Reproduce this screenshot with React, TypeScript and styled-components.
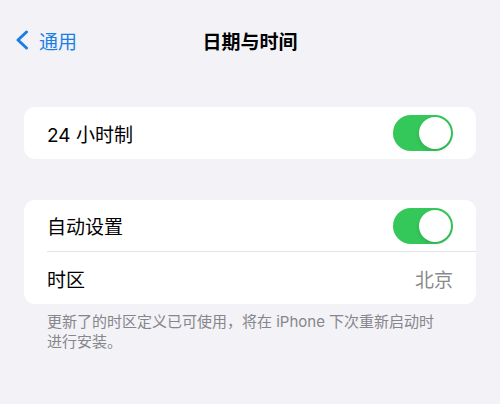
import React from "react";
import styled, { createGlobalStyle } from "styled-components";

const Global = createGlobalStyle`
  html, body { margin: 0; padding: 0; background: #f2f2f7; }
  body { font-family: "Inter", "Noto Sans CJK SC", sans-serif; -webkit-font-smoothing: antialiased; }
`;

const Page = styled.div`
  width: 500px;
  height: 404px;
  background: #f2f2f7;
  overflow: hidden;
`;

const NavBar = styled.div`
  margin-top: 20px;
  height: 40px;
  display: grid;
  grid-template-columns: 1fr auto 1fr;
  align-items: center;
`;

const Back = styled.div`
  display: flex;
  align-items: center;
  gap: 10px;
  padding-left: 15px;
  color: #1a7fe4;
  font-size: 19px;
  font-family: "Noto Sans CJK SC", sans-serif;
`;

const Title = styled.div`
  font-family: "Noto Sans CJK SC", sans-serif;
  font-size: 19px;
  font-weight: 700;
  color: #000;
`;

const Group = styled.div<{ $top: number }>`
  margin: ${(p) => p.$top}px 24px 0;
  background: #fff;
  border-radius: 11px;
  overflow: hidden;
`;

const Row = styled.div<{ $divider?: boolean }>`
  height: 52px;
  margin-left: 23px;
  padding-right: 23px;
  display: flex;
  align-items: center;
  justify-content: space-between;
  box-sizing: border-box;
  border-bottom: ${(p) => (p.$divider ? "1px solid #e3e3e7" : "none")};
`;

const Label = styled.span`
  font-family: "Inter", "Noto Sans CJK SC", sans-serif;
  font-size: 19px;
  color: #000;
`;

const Value = styled.span`
  font-family: "Noto Sans CJK SC", sans-serif;
  font-size: 19px;
  color: #8a8a8e;
`;

const Toggle = styled.div`
  width: 60px;
  height: 36px;
  border-radius: 18px;
  background: #34c759;
  position: relative;
  flex-shrink: 0;
  &::after {
    content: "";
    position: absolute;
    top: 2px;
    right: 2px;
    width: 32px;
    height: 32px;
    border-radius: 50%;
    background: #fff;
    box-shadow: 0 2px 4px rgba(0, 0, 0, 0.12);
  }
`;

const Footer = styled.p`
  margin: 8px 0 0;
  padding: 0 55px 0 47px;
  font-family: "Inter", "Noto Sans CJK SC", sans-serif;
  font-size: 15px;
  line-height: 20px;
  color: #86868b;
`;

export default function App() {
  return (
    <Page>
      <Global />
      <NavBar>
        <Back>
          <svg width="14" height="20" viewBox="0 0 14 20" fill="none">
            <polyline
              points="11.5,2 3,10 11.5,18"
              stroke="#1a7fe4"
              strokeWidth="3"
              strokeLinecap="round"
              strokeLinejoin="round"
            />
          </svg>
          <span>通用</span>
        </Back>
        <Title>日期与时间</Title>
        <div />
      </NavBar>
      <Group $top={47}>
        <Row>
          <Label>24 小时制</Label>
          <Toggle />
        </Row>
      </Group>
      <Group $top={41}>
        <Row $divider>
          <Label>自动设置</Label>
          <Toggle />
        </Row>
        <Row>
          <Label>时区</Label>
          <Value>北京</Value>
        </Row>
      </Group>
      <Footer>更新了的时区定义已可使用，将在 iPhone 下次重新启动时进行安装。</Footer>
    </Page>
  );
}
